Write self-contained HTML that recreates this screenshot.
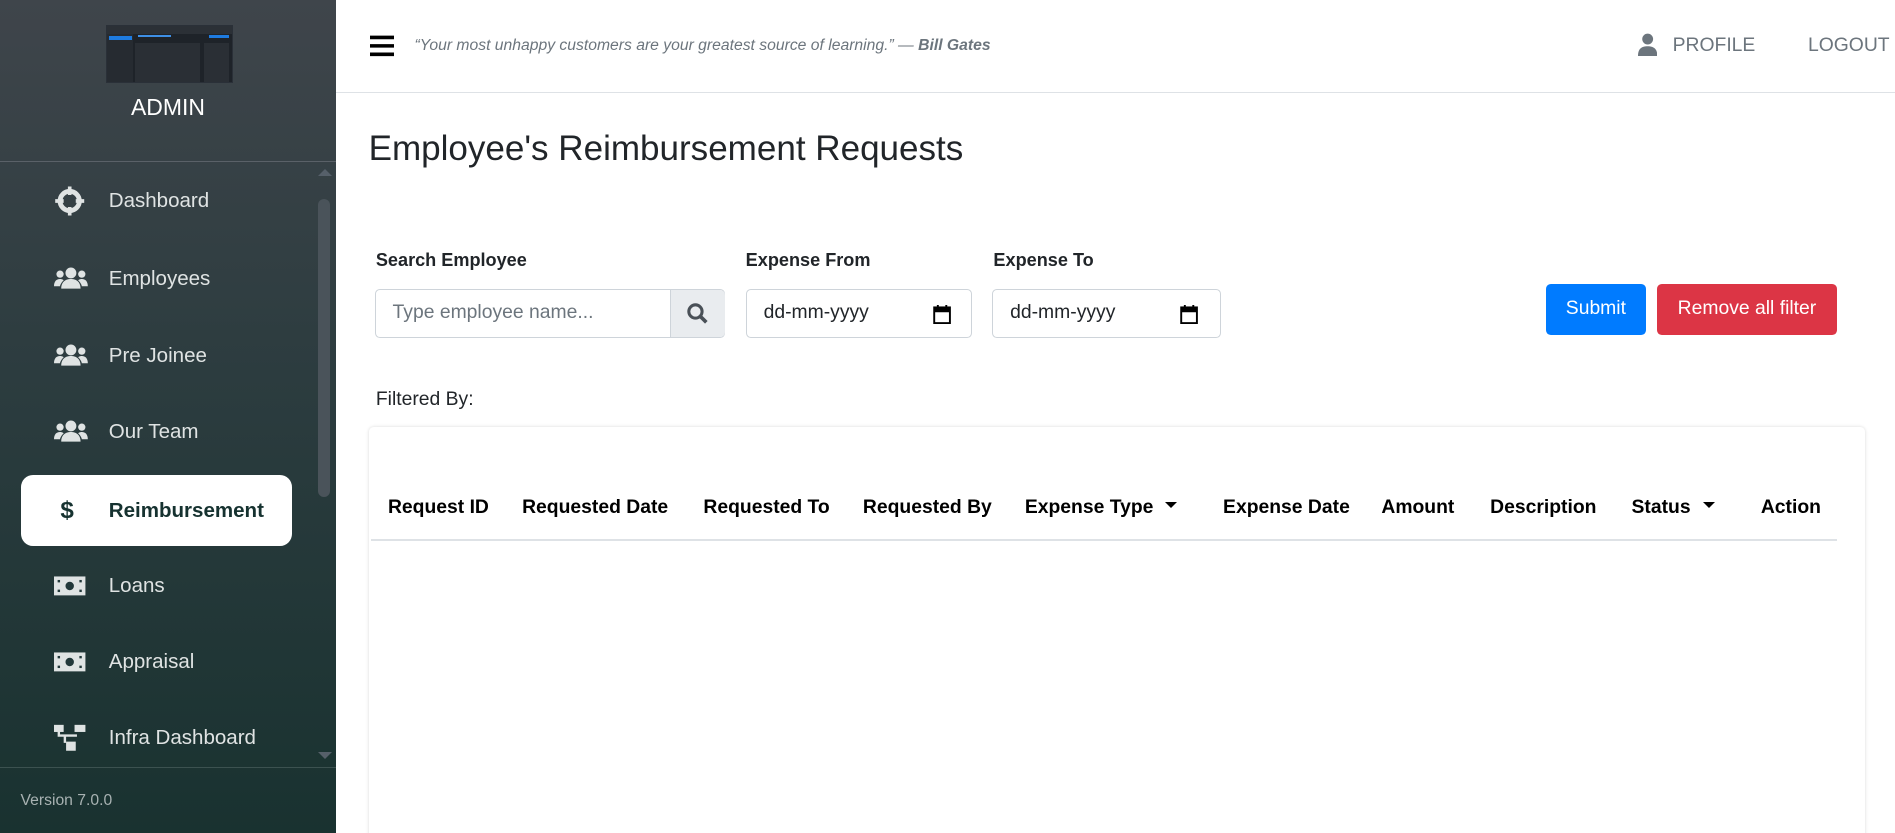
<!DOCTYPE html>
<html><head><meta charset="utf-8"><style>
html,body{margin:0;padding:0;overflow:hidden;background:#fff}
#w{zoom:1.20855;width:1568px;height:689px;position:relative;font-family:"Liberation Sans",sans-serif;overflow:hidden}
#sb{position:absolute;left:0;top:0;width:278px;height:689px;background:linear-gradient(#3f454b,#2c3c3f 45%,#193230)}
.logo{position:absolute;left:88px;top:21px;width:103px;height:46px;background:#1e2329;border:1px solid #2a3038}
.logo i{position:absolute;display:block}
.admin{position:absolute;top:78px;width:278px;text-align:center;color:#fff;font-size:19px}
.hr1{position:absolute;top:133px;left:0;width:278px;border-top:1px solid #5a6168}
.hr2{position:absolute;top:635px;left:0;width:278px;border-top:1px solid #3c5250}
.it{position:absolute;left:17px;width:225px;height:59px;color:#dfe3e3;font-size:17px}
.it span{position:absolute;left:73px;top:50%;transform:translateY(-50%)}
.it svg{position:absolute;left:28px;top:50%;transform:translateY(-50%)}
.act{background:#fff;border-radius:10px;color:#163230;font-weight:bold}
.ver{position:absolute;left:17px;top:655px;color:#a8b2b2;font-size:13px}
.scr{position:absolute;left:263px;top:165px;width:10px;height:246px;background:#4a535a;border-radius:5px}
#hd{position:absolute;left:278px;top:0;right:0;height:76px;border-bottom:1px solid #dee2e6}
.q{position:absolute;left:65px;top:31px;font-style:italic;color:#6c757d;font-size:13px}
.nav{position:absolute;top:29px;color:#6c757d;font-size:16px}
h1{position:absolute;left:305px;top:107px;margin:0;font-weight:normal;font-size:29px;color:#212529}
.lb{position:absolute;top:207px;font-weight:bold;font-size:15px;color:#212529}
.in{position:absolute;top:239px;height:41px;border:1px solid #ced4da;border-radius:4px;box-sizing:border-box;font-size:16px;color:#6c757d;padding:10px 14px}
.btn{position:absolute;top:235px;height:42px;border-radius:4px;color:#fff;font-size:16px;line-height:42px;text-align:center}
.card{position:absolute;left:305px;top:353px;width:1238px;height:350px;border-radius:4px;box-shadow:0 0 3px rgba(0,0,0,.15)}
.th{position:absolute;top:411px;font-weight:bold;font-size:16px;color:#000}
.car{display:inline-block;border-left:5px solid transparent;border-right:5px solid transparent;border-top:5px solid #000;vertical-align:middle;margin-left:10px;margin-top:-4px}
</style></head><body><div id="w">
<div id="sb">
<div class="logo"><i style="left:0;top:0;width:103px;height:6px;background:#2b3036"></i><i style="left:0;top:6px;width:21px;height:40px;background:#262b31"></i><i style="left:1px;top:8px;width:19px;height:3px;background:#1e7be0"></i><i style="left:25px;top:7px;width:28px;height:2px;background:#3e8fe6"></i><i style="left:84px;top:7px;width:17px;height:3px;background:#1e7be0"></i><i style="left:23px;top:14px;width:54px;height:32px;background:#2a2f35"></i><i style="left:80px;top:14px;width:21px;height:32px;background:#2a2f35"></i></div>
<div class="admin">ADMIN</div>
<div class="hr1"></div>
<div style="position:absolute;left:263px;top:140px;border-left:6px solid transparent;border-right:6px solid transparent;border-bottom:6px solid #56606a"></div>
<div class="scr"></div>
<div style="position:absolute;left:263px;top:622px;border-left:6px solid transparent;border-right:6px solid transparent;border-top:6px solid #56606a"></div>
<div class="it" style="top:137px"><svg width="26" height="26" viewBox="0 0 26 26"><circle cx="13" cy="13" r="8" fill="none" stroke="#dfe3e3" stroke-width="4"/><path d="M13 1v7M13 18v7M1 13h7M18 13h7" stroke="#dfe3e3" stroke-width="3"/></svg><span>Dashboard</span></div>
<div class="it" style="top:201px"><svg width="28" height="20" viewBox="0 0 28 20"><g fill="#dfe3e3"><circle cx="14" cy="5" r="4.5"/><circle cx="5" cy="6" r="3"/><circle cx="23" cy="6" r="3"/><path d="M6 18c0-6 4-8 8-8s8 2 8 8zM0 16c0-4 2-6 5-6 2 0 3 1 3 1-2 2-3 4-3 5zM28 16c0-4-2-6-5-6-2 0-3 1-3 1 2 2 3 4 3 5z"/></g></svg><span>Employees</span></div>
<div class="it" style="top:265px"><svg width="28" height="20" viewBox="0 0 28 20"><g fill="#dfe3e3"><circle cx="14" cy="5" r="4.5"/><circle cx="5" cy="6" r="3"/><circle cx="23" cy="6" r="3"/><path d="M6 18c0-6 4-8 8-8s8 2 8 8zM0 16c0-4 2-6 5-6 2 0 3 1 3 1-2 2-3 4-3 5zM28 16c0-4-2-6-5-6-2 0-3 1-3 1 2 2 3 4 3 5z"/></g></svg><span>Pre Joinee</span></div>
<div class="it" style="top:328px"><svg width="28" height="20" viewBox="0 0 28 20"><g fill="#dfe3e3"><circle cx="14" cy="5" r="4.5"/><circle cx="5" cy="6" r="3"/><circle cx="23" cy="6" r="3"/><path d="M6 18c0-6 4-8 8-8s8 2 8 8zM0 16c0-4 2-6 5-6 2 0 3 1 3 1-2 2-3 4-3 5zM28 16c0-4-2-6-5-6-2 0-3 1-3 1 2 2 3 4 3 5z"/></g></svg><span>Our Team</span></div>
<div class="it act" style="top:393px"><span style="left:33px;font-size:20px">$</span><span>Reimbursement</span></div>
<div class="it" style="top:455px"><svg width="26" height="16" viewBox="0 0 26 16"><rect width="26" height="16" fill="#dfe3e3"/><circle cx="13" cy="8" r="3.5" fill="#22383a"/><g fill="#22383a"><rect x="3" y="3" width="2" height="2"/><rect x="21" y="3" width="2" height="2"/><rect x="3" y="11" width="2" height="2"/><rect x="21" y="11" width="2" height="2"/></g></svg><span>Loans</span></div>
<div class="it" style="top:518px"><svg width="26" height="16" viewBox="0 0 26 16"><rect width="26" height="16" fill="#dfe3e3"/><circle cx="13" cy="8" r="3.5" fill="#22383a"/><g fill="#22383a"><rect x="3" y="3" width="2" height="2"/><rect x="21" y="3" width="2" height="2"/><rect x="3" y="11" width="2" height="2"/><rect x="21" y="11" width="2" height="2"/></g></svg><span>Appraisal</span></div>
<div class="it" style="top:581px"><svg width="26" height="22" viewBox="0 0 26 22"><g fill="#dfe3e3"><rect x="0" y="0" width="8" height="6"/><rect x="17" y="0" width="9" height="6"/><rect x="10" y="14" width="8" height="8"/><path d="M3 5h2v3h14v2H10v5H8V10H3z"/></g></svg><span>Infra Dashboard</span></div>
<div class="hr2"></div>
<div class="ver">Version 7.0.0</div>
</div>
<div id="hd">
<svg style="position:absolute;left:28px;top:29px" width="20" height="18" viewBox="0 0 20 18"><path d="M0 2h20M0 9h20M0 16h20" stroke="#000" stroke-width="3"/></svg>
<div class="q">“Your most unhappy customers are your greatest source of learning.” — <b>Bill Gates</b></div>
<svg style="position:absolute;left:1077px;top:27px" width="16" height="19" viewBox="0 0 16 19"><circle cx="8" cy="5" r="4.5" fill="#6c757d"/><path d="M0 19c0-6 3-8 8-8s8 2 8 8z" fill="#6c757d"/></svg>
<div class="nav" style="left:1106px">PROFILE</div>
<div class="nav" style="left:1218px">LOGOUT</div>
</div>
<h1>Employee's Reimbursement Requests</h1>
<div class="lb" style="left:311px">Search Employee</div>
<div class="lb" style="left:617px">Expense From</div>
<div class="lb" style="left:822px">Expense To</div>
<div class="in" style="left:310px;width:290px">Type employee name...</div>
<div style="position:absolute;left:554px;top:240px;width:45px;height:39px;background:#e9ecef;border-left:1px solid #ced4da;border-radius:0 4px 4px 0"><svg style="position:absolute;left:14px;top:11px" width="17" height="17" viewBox="0 0 17 17"><circle cx="7" cy="7" r="5.5" fill="none" stroke="#495057" stroke-width="2.5"/><path d="M11 11l5 5" stroke="#495057" stroke-width="3"/></svg></div>
<div class="in" style="left:617px;width:187px;color:#212529">dd-mm-yyyy</div>
<div class="in" style="left:821px;width:189px;color:#212529">dd-mm-yyyy</div>
<svg style="position:absolute;left:772px;top:252px" width="15" height="16" viewBox="0 0 15 16"><rect x="1" y="2" width="13" height="13" fill="none" stroke="#000" stroke-width="1.6"/><rect x="1" y="2" width="13" height="4"/><path d="M4 0v3M11 0v3" stroke="#000" stroke-width="1.6"/></svg>
<svg style="position:absolute;left:976px;top:252px" width="15" height="16" viewBox="0 0 15 16"><rect x="1" y="2" width="13" height="13" fill="none" stroke="#000" stroke-width="1.6"/><rect x="1" y="2" width="13" height="4"/><path d="M4 0v3M11 0v3" stroke="#000" stroke-width="1.6"/></svg>
<div class="btn" style="left:1279px;width:83px;background:#007bff">Submit</div>
<div class="btn" style="left:1371px;width:149px;background:#dc3545">Remove all filter</div>
<div style="position:absolute;left:311px;top:322px;font-size:16px;color:#212529">Filtered By:</div>
<div class="card"></div>
<div class="th" style="left:321px">Request ID</div>
<div class="th" style="left:432px">Requested Date</div>
<div class="th" style="left:582px">Requested To</div>
<div class="th" style="left:714px">Requested By</div>
<div class="th" style="left:848px">Expense Type<span class="car"></span></div>
<div class="th" style="left:1012px">Expense Date</div>
<div class="th" style="left:1143px">Amount</div>
<div class="th" style="left:1233px">Description</div>
<div class="th" style="left:1350px">Status<span class="car"></span></div>
<div class="th" style="left:1457px">Action</div>
<div style="position:absolute;left:307px;top:446px;width:1213px;border-top:2px solid #dee2e6"></div>
</div></body></html>
